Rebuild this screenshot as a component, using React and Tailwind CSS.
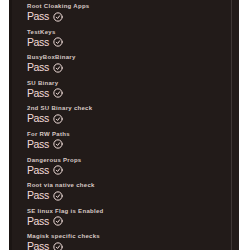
import React from "react";

const items = [
  "Root Cloaking Apps",
  "TestKeys",
  "BusyBoxBinary",
  "SU Binary",
  "2nd SU Binary check",
  "For RW Paths",
  "Dangerous Props",
  "Root via native check",
  "SE linux Flag is Enabled",
  "Magisk specific checks",
];

function CheckIcon() {
  return (
    <svg width="10" height="10" viewBox="0 0 24 24" fill="none" stroke="#efdcd8" strokeWidth="2.4" strokeLinecap="round" strokeLinejoin="round">
      <circle cx="12" cy="12" r="10" />
      <path d="m8 12.5 3 3 5-6.5" />
    </svg>
  );
}

export default function App() {
  return (
    <div className="w-[250px] h-[250px] bg-white overflow-hidden flex" style={{ fontFamily: '"Liberation Sans", Arial, sans-serif' }}>
      <div className="ml-[9px] w-[230px] h-[250px] bg-[#221b19] flex">
        <div className="w-[3px] bg-[#1b1513]" />
        <div className="flex-1 flex flex-col pl-[15px] pt-[2px]">
          {items.map((t) => (
            <div key={t} className="h-[25.6px] shrink-0 flex flex-col">
              <div className="text-[6px] leading-[8px] font-bold tracking-[0.3px] text-[#d8cac6]">{t}</div>
              <div className="flex items-center gap-[4px] h-[13px]">
                <span className="text-[10.5px] leading-[13px] tracking-[-0.4px] text-[#f2dcd8]">Pass</span>
                <CheckIcon />
              </div>
            </div>
          ))}
        </div>
        <div className="w-[1px] bg-[#3e3634]" />
        <div className="w-[7px] bg-[#221b19]" />
      </div>
    </div>
  );
}
